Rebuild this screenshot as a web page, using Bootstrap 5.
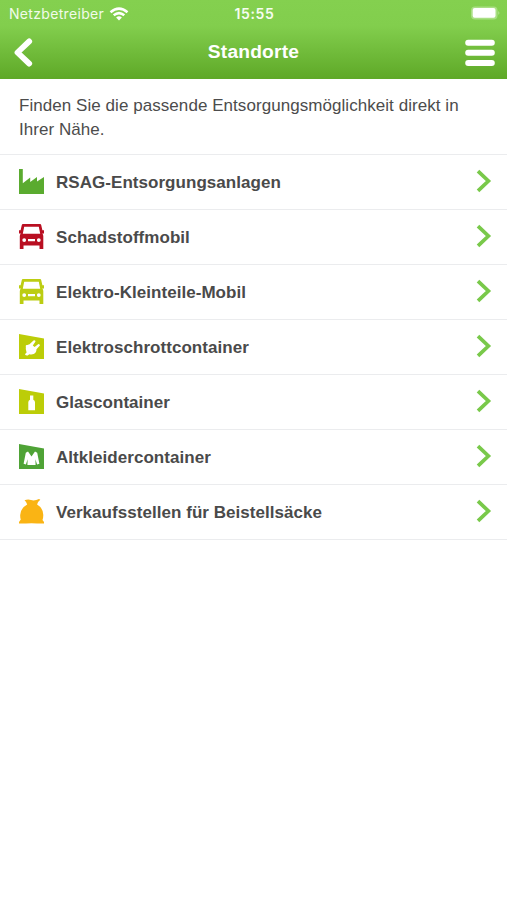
<!DOCTYPE html>
<html lang="de">
<head>
<meta charset="utf-8">
<meta name="viewport" content="width=device-width, initial-scale=1">
<title>Standorte</title>
<link href="https://cdn.jsdelivr.net/npm/bootstrap@5.3.0/dist/css/bootstrap.min.css" rel="stylesheet">
<style>
body{font-family:"Liberation Sans",Arial,sans-serif;color:#4c4c4c;background:#fff}
.app-head{height:79px;background:linear-gradient(#84d04f 0,#82ce4d 26px,#5fa928 78px,#5fa928 100%);color:#fff}
.status{height:27px;padding:0 7px 0 9px;font-family:Inter,sans-serif;font-size:14px}
.status>div{flex:1 1 0}
.carrier{letter-spacing:.32px;color:#f1fbe9}
.wifi{margin-left:5px}
.clock{font-weight:600;letter-spacing:.6px;color:#f6fdf0}
.titlebar{height:51px;padding:0 12px 0 14px}
.titlebar h1{font-size:19.2px;font-weight:700;line-height:1;letter-spacing:.2px;padding:0 2px 1px 0}
.intro{height:75px;padding:15px 19px 0;font-size:17px;line-height:24px;letter-spacing:.055px}
.places{border-top:1px solid #ebecee}
.places .list-group-item{height:55px;padding:0 15px 1px 19px;border-color:#ebecee;color:#4a4a4a;font-size:17px;font-weight:700;letter-spacing:.045px}
.places .list-group-item:last-child{border-bottom:1px solid #ebecee}
.places svg:first-child{margin-right:12px}
.places span{padding-top:2px}
.places svg:last-child{margin-bottom:1px}
</style>
</head>
<body>
<header class="app-head">
  <div class="status d-flex align-items-center">
    <div class="d-flex align-items-center"><span class="carrier">Netzbetreiber</span>
      <svg class="wifi" width="20" height="14" viewBox="0 0 20 14" fill="none" stroke="#fff" stroke-width="2.5"><path d="M1.5 5.2Q10-2 18.5 5.2M4.7 8.3Q10 3.9 15.3 8.3"/><path d="M10 13.4 7.1 10.5Q10 8.2 12.9 10.5Z" fill="#fff" stroke="none"/></svg>
    </div>
    <span class="clock">15:55</span>
    <div class="d-flex justify-content-end"><svg width="30" height="15" viewBox="0 0 30 15"><rect x="1" y=".4" width="26.5" height="13" rx="4" fill="#a9df84"/><rect x="2.7" y="2.1" width="22.8" height="9.6" rx="2" fill="#fff"/><path d="M28.3 5q2.2 1.9 0 3.8z" fill="#b5e493"/></svg></div>
  </div>
  <nav class="titlebar d-flex align-items-center justify-content-between">
    <svg width="30" height="30" viewBox="0 0 30 30" fill="none" stroke="#fff" stroke-width="5.8" stroke-linecap="round" stroke-linejoin="round"><path d="M15.2 3.4 3.5 14.5 15.2 25.6"/></svg>
    <h1 class="m-0">Standorte</h1>
    <svg width="30" height="28" viewBox="0 0 30 28" fill="#fff"><rect x=".2" y=".7" width="29.6" height="6" rx="3"/><rect x=".2" y="10.8" width="29.6" height="6" rx="3"/><rect x=".2" y="21" width="29.6" height="6" rx="3"/></svg>
  </nav>
</header>
<main>
  <p class="intro m-0">Finden Sie die passende Entsorgungsmöglichkeit direkt in Ihrer Nähe.</p>
  <div class="places list-group list-group-flush">
    <a href="#" class="list-group-item d-flex align-items-center">
      <svg width="25" height="25" viewBox="0 0 25 25"><path fill="#5aab2f" d="M0 0h3.8v14.2l7.4-5.8v4.6l6.8-5v4.6l7-4.6V25H0z"/></svg>
      <span class="flex-grow-1">RSAG-Entsorgungsanlagen</span><svg width="16" height="24" viewBox="0 0 16 24"><use href="#chev"/></svg></a>
    <a href="#" class="list-group-item d-flex align-items-center">
      <svg width="25" height="25" viewBox="0 0 25 25" color="#b90f22"><use href="#car"/></svg>
      <span class="flex-grow-1">Schadstoffmobil</span><svg width="16" height="24" viewBox="0 0 16 24"><use href="#chev"/></svg></a>
    <a href="#" class="list-group-item d-flex align-items-center">
      <svg width="25" height="25" viewBox="0 0 25 25" color="#bccd12"><use href="#car"/></svg>
      <span class="flex-grow-1">Elektro-Kleinteile-Mobil</span><svg width="16" height="24" viewBox="0 0 16 24"><use href="#chev"/></svg></a>
    <a href="#" class="list-group-item d-flex align-items-center">
      <svg width="25" height="25" viewBox="0 0 25 25"><path fill="#bccd08" d="M0 0 25 4.4V25H0z"/><path fill="#fff" d="M6.6 12.2Q7 10.6 8.3 11l2.2-.8 4-3.8q1.8-.5 2 1.2l-2.7 3.8 1.8 1.6 3.8-3.1q1.7 0 1.5 1.6l-3.4 3.8q-.1 3.6-2.8 4.8-2.3.8-4.4.1l-1.600 1.300q-1.900.300-2.800-1.300l1.700-1.800q-1.300-3.100-.700-6z"/></svg>
      <span class="flex-grow-1">Elektroschrottcontainer</span><svg width="16" height="24" viewBox="0 0 16 24"><use href="#chev"/></svg></a>
    <a href="#" class="list-group-item d-flex align-items-center">
      <svg width="25" height="25" viewBox="0 0 25 25"><path fill="#bccd08" d="M0 0 25 4.4V25H0z"/><path fill="#fff" d="M11 6.4h3.3v4.4q1.7.8 1.7 2.5v8H9.3v-8q0-1.7 1.7-2.5z"/></svg>
      <span class="flex-grow-1">Glascontainer</span><svg width="16" height="24" viewBox="0 0 16 24"><use href="#chev"/></svg></a>
    <a href="#" class="list-group-item d-flex align-items-center">
      <svg width="25" height="25" viewBox="0 0 25 25"><path fill="#4fa336" d="M0 0 25 4.4V25H0z"/><path fill="#fff" d="M9 7.500 12.500 12.500 16 7.500l2.200 1.200 2.200 11-2.300.700-1.700-5.200.200 5.800H8.400l.200-5.800-1.700 5.200-2.300-.700 2.200-11z"/></svg>
      <span class="flex-grow-1">Altkleidercontainer</span><svg width="16" height="24" viewBox="0 0 16 24"><use href="#chev"/></svg></a>
    <a href="#" class="list-group-item d-flex align-items-center">
      <svg width="25" height="25" viewBox="0 0 25 25"><path fill="#fab414" d="M5.500 1.200Q9.400 0 12 1.100q4 1 8-1.100l1.300.8q-3 2.200-3.200 4.800 6.200 3.600 6.200 10.400 0 2.600-.8 5l1.500 2v1.500h-7q-5.500-.7-11 0H0V23l1.800-2.400Q1.100 18.700 1.200 16 1.400 9.300 8.200 5.600 8 3.400 5.500 1.200z"/></svg>
      <span class="flex-grow-1">Verkaufsstellen für Beistellsäcke</span><svg width="16" height="24" viewBox="0 0 16 24"><use href="#chev"/></svg></a>
  </div>
</main>
<svg class="d-none">
  <symbol id="chev" viewBox="0 0 16 24"><path d="M2 2.2 12.4 12 2 21.8" fill="none" stroke="#79c94a" stroke-width="3.7"/></symbol>
  <symbol id="car" viewBox="0 0 25 25"><path fill="currentColor" fill-rule="evenodd" d="M4 0h17q1 0 1.200 1l1.200 5.200H25v3.200h-1.700q1 1.100 1 2.800V25h-3.800v-3.600h-16V25H.8V12.200q0-1.700 1-2.800H0V6.200h1.600L2.800 1Q3 0 4 0zM5.200 2.800 3.800 9.800h17.400L19.800 2.800zM5.200 14.200a1.900 1.900 0 1 0 0 3.800 1.900 1.900 0 1 0 0-3.800zM19.800 14.200a1.900 1.900 0 1 0 0 3.800 1.900 1.900 0 1 0 0-3.800zM9 15v2.200h7V15z"/></symbol>
</svg>
<script src="https://cdn.jsdelivr.net/npm/bootstrap@5.3.0/dist/js/bootstrap.bundle.min.js"></script>
</body>
</html>
